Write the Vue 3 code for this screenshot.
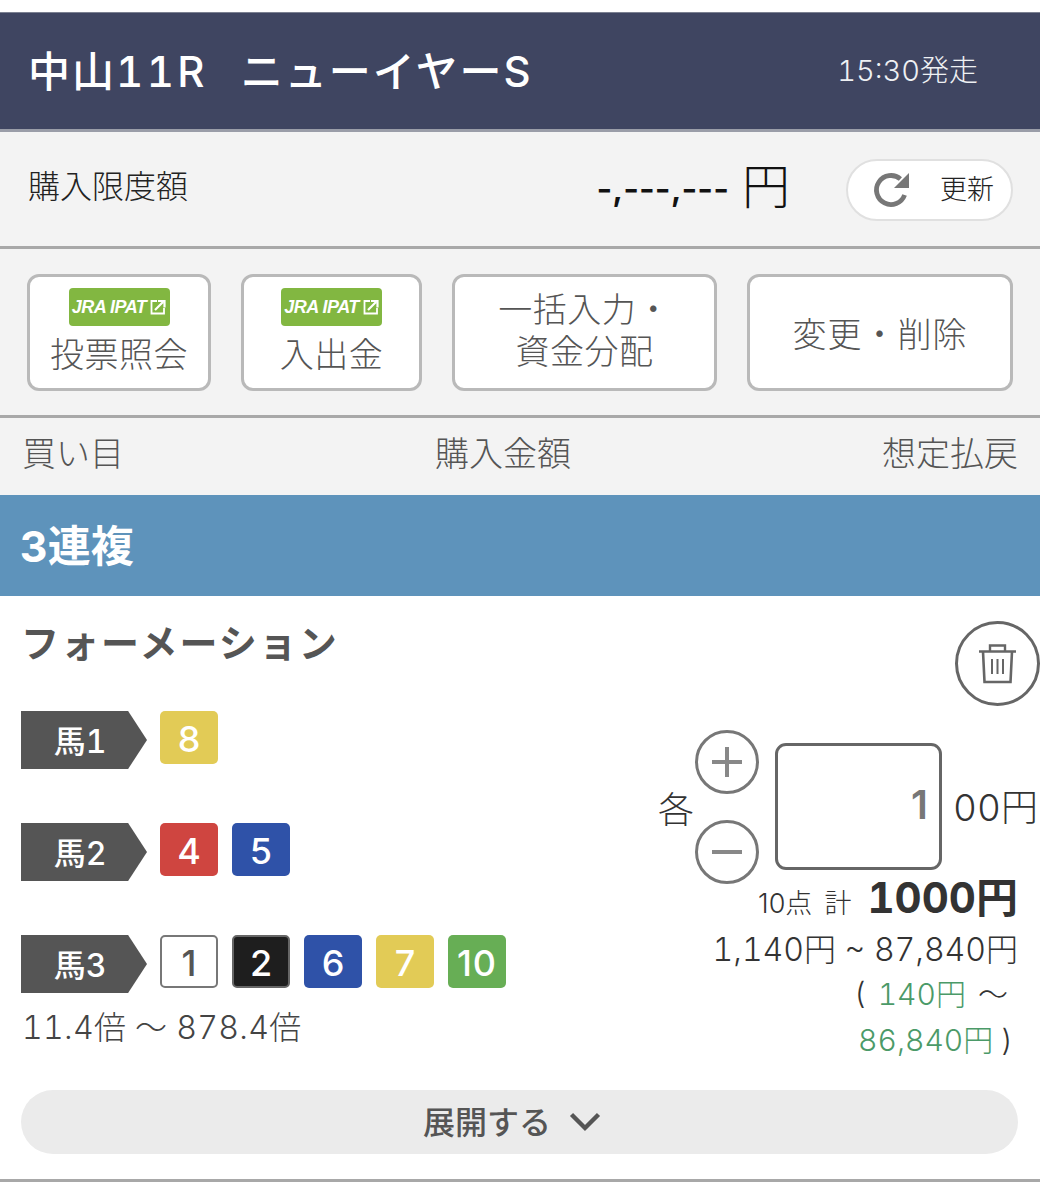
<template>
  <div class="page">
    <header class="race-head">
      <div class="race-title"><span>中山<span class="race-no">11R</span></span><span>ニューイヤーS</span></div>
      <div class="race-time">15:30発走</div>
    </header>

    <section class="limit-row">
      <div class="limit-label">購入限度額</div>
      <div class="limit-value">
        <span class="limit-num">-,---,---</span>
        <span class="limit-yen">円</span>
      </div>
      <button class="refresh">
        <svg width="38" height="38" viewBox="0 0 38 38">
          <path d="M32.6 24 A14.5 14.5 0 1 1 28.4 8" fill="none" stroke="#777" stroke-width="4.8" />
          <path d="M37 2 V17 H22 Z" fill="#777" />
        </svg>
        <span>更新</span>
      </button>
    </section>

    <section class="action-row">
      <button class="action w1">
        <span class="ipat">JRA IPAT
          <svg width="16" height="16" viewBox="0 0 16 16">
            <path d="M7 2H1.5V14.5H14V9" fill="none" stroke="#fff" stroke-width="1.8" />
            <path d="M5 11 13 3M8 2H14.5V8.5" fill="none" stroke="#fff" stroke-width="2.2" />
          </svg>
        </span>
        <span>投票照会</span>
      </button>
      <button class="action w2">
        <span class="ipat">JRA IPAT
          <svg width="16" height="16" viewBox="0 0 16 16">
            <path d="M7 2H1.5V14.5H14V9" fill="none" stroke="#fff" stroke-width="1.8" />
            <path d="M5 11 13 3M8 2H14.5V8.5" fill="none" stroke="#fff" stroke-width="2.2" />
          </svg>
        </span>
        <span>入出金</span>
      </button>
      <button class="action w3"><span>一括入力・</span><span>資金分配</span></button>
      <button class="action w4">変更・削除</button>
    </section>

    <section class="col-heads">
      <span>買い目</span>
      <span>購入金額</span>
      <span>想定払戻</span>
    </section>

    <div class="bet-type">3連複</div>

    <section class="card">
      <div class="card-top">
        <h2>フォーメーション</h2>
        <button class="trash">
          <svg width="37" height="40" viewBox="0 0 37 40" fill="none" stroke="#666">
            <path d="M0 7.5H37" stroke-width="2.6" />
            <path d="M11 7V1.5H26V7" stroke-width="2.4" />
            <path d="M4 7.5 5.5 38H31.5L33 7.5" stroke-width="2.6" />
            <path d="M13 15V30M18.5 15V30M24 15V30" stroke-width="2" />
          </svg>
        </button>
      </div>

      <div class="card-body">
        <div class="picks">
          <div v-for="row in rows" :key="row.label" class="pick-row">
            <div class="tag">{{ row.label }}</div>
            <div v-for="h in row.horses" :key="h.n" class="horse" :class="h.c">{{ h.n }}</div>
          </div>
          <div class="odds">11.4倍 ～ 878.4倍</div>
        </div>

        <div class="amount">
          <div class="amount-row">
            <span class="each">各</span>
            <div class="steppers">
              <button class="step">
                <svg width="30" height="30" viewBox="0 0 30 30"><path d="M0 15H30M15 0V30" stroke="#888" stroke-width="4" /></svg>
              </button>
              <button class="step">
                <svg width="30" height="30" viewBox="0 0 30 30"><path d="M0 15H30" stroke="#888" stroke-width="4" /></svg>
              </button>
            </div>
            <div class="input">1</div>
            <span class="unit">00円</span>
          </div>
          <div class="summary">
            <div class="total"><span class="pts">10点</span><span class="pts kei">計</span><b>1000円</b></div>
            <div class="payout">1,140円 ~ 87,840円</div>
            <div class="profit first">( <em>140円</em> ～</div>
            <div class="profit second"><em>86,840円</em> )</div>
          </div>
        </div>
      </div>

      <button class="expand">
        <span>展開する</span>
        <svg width="32" height="20" viewBox="0 0 32 20"><path d="M2.5 2.5 16 16 29.5 2.5" fill="none" stroke="#555" stroke-width="4.4" /></svg>
      </button>
    </section>
  </div>
</template>

<script setup>
const rows = [
  { label: '馬1', horses: [{ n: 8, c: 'yellow' }] },
  { label: '馬2', horses: [{ n: 4, c: 'red' }, { n: 5, c: 'blue' }] },
  {
    label: '馬3',
    horses: [
      { n: 1, c: 'white' },
      { n: 2, c: 'black' },
      { n: 6, c: 'blue' },
      { n: 7, c: 'yellow' },
      { n: 10, c: 'green' },
    ],
  },
];
</script>

<style>
body {
  margin: 0;
  background: #fff;
}
</style>

<style scoped>
.page {
  width: 1040px;
  padding-top: 12px;
  font-family: Inter, "Noto Sans CJK JP", "Noto Sans", sans-serif;
  font-variant-numeric: tabular-nums;
  color: #333;
}

button {
  font-family: inherit;
  font-variant-numeric: inherit;
  padding: 0;
  cursor: pointer;
}

.race-head {
  box-sizing: border-box;
  background: #3f4561;
  border-top: 1px solid #7b8091;
  border-bottom: 3px solid #9a9da8;
  height: 120px;
  display: flex;
  align-items: center;
  justify-content: space-between;
  padding: 0 62px 6px 28px;
  color: #fff;
}

.race-title {
  display: flex;
  gap: 33px;
  font-size: 42px;
  font-weight: 500;
  letter-spacing: 2px;
}

.race-no {
  letter-spacing: 3.4px;
}

.race-time {
  font-size: 29px;
  font-weight: 300;
  color: #eef0f3;
}

.limit-row {
  height: 117px;
  box-sizing: border-box;
  background: #f3f3f3;
  border-bottom: 3px solid #a8a8a8;
  display: flex;
  align-items: center;
  padding: 0 27px 0 28px;
}

.limit-label {
  font-size: 32px;
  font-weight: 300;
  color: #222;
  margin-bottom: 10px;
}

.limit-value {
  margin-left: auto;
  margin-right: 56px;
  display: flex;
  align-items: center;
  gap: 13px;
  color: #111;
  margin-bottom: 8px;
}

.limit-num {
  font-size: 34px;
  font-weight: 600;
  font-variant-numeric: normal;
  margin-top: 6px;
}

.limit-yen {
  font-size: 48px;
  font-weight: 300;
  margin-top: -4px;
}

.refresh {
  width: 167px;
  height: 62px;
  background: #fff;
  border: 2px solid #e0e0e0;
  border-radius: 31px;
  display: flex;
  align-items: center;
  gap: 28px;
  padding-left: 24px;
  box-sizing: border-box;
  font-size: 27px;
  font-weight: 300;
  color: #222;
  margin-top: 2px;
}

.refresh span {
  margin-top: -6px;
  margin-left: 2px;
}

.action-row {
  height: 169px;
  box-sizing: border-box;
  background: #f3f3f3;
  border-bottom: 3px solid #a8a8a8;
  display: flex;
  gap: 30px;
  padding: 25px 27px 0;
}

.action {
  height: 117px;
  box-sizing: border-box;
  background: #fff;
  border: 3px solid #b9b9b9;
  border-radius: 12px;
  font-size: 34px;
  font-weight: 300;
  line-height: 42px;
  color: #555;
  display: flex;
  flex-direction: column;
  align-items: center;
  justify-content: center;
  letter-spacing: 0.5px;
}

.w1 { width: 184px; padding-bottom: 1px; }
.w2 { width: 181px; padding-bottom: 1px; }
.w3 { width: 265px; padding-bottom: 4px; }
.w4 { width: 266px; padding-top: 4px; letter-spacing: 1px; }

.ipat {
  width: 101px;
  height: 38px;
  background: #82b741;
  border-radius: 4px;
  color: #fff;
  font-family: "Liberation Sans", sans-serif;
  font-size: 18px;
  font-style: italic;
  font-weight: 700;
  letter-spacing: -0.5px;
  display: flex;
  align-items: center;
  justify-content: center;
  gap: 4px;
  margin-bottom: 8px;
  line-height: 1;
}

.col-heads {
  height: 77px;
  box-sizing: border-box;
  background: #f3f3f3;
  display: flex;
  align-items: center;
  justify-content: space-between;
  padding: 0 22px 10px;
  font-size: 34px;
  font-weight: 300;
  color: #555;
}

.bet-type {
  height: 101px;
  background: #5e93bb;
  color: #fff;
  font-size: 43px;
  font-weight: 700;
  line-height: 102px;
  padding-left: 20px;
}

.card {
  height: 586px;
  box-sizing: border-box;
  border-bottom: 3px solid #a8a8a8;
  padding-top: 25px;
  position: relative;
}

.card-top {
  height: 84px;
  display: flex;
  justify-content: space-between;
  padding-left: 21px;
}

.card-top h2 {
  margin: 0;
  font-size: 38px;
  font-weight: 700;
  line-height: 44px;
  color: #555;
  letter-spacing: 2px;
}

.trash {
  width: 85px;
  height: 85px;
  box-sizing: border-box;
  background: #fff;
  border: 3px solid #666;
  border-radius: 50%;
  display: flex;
  align-items: center;
  justify-content: center;
}

.card-body {
  display: flex;
  justify-content: space-between;
  padding-left: 21px;
  height: 385px;
}

.picks {
  padding-top: 6px;
}

.pick-row {
  display: flex;
  gap: 13px;
  height: 58px;
  margin-bottom: 54px;
}

.pick-row .horse + .horse {
  margin-left: 1px;
}

.pick-row:nth-child(3) {
  margin-bottom: 13px;
}

.tag {
  width: 126px;
  height: 58px;
  background: #555;
  color: #fff;
  font-size: 32px;
  font-weight: 500;
  line-height: 62px;
  text-align: center;
  clip-path: polygon(0 0, 85% 0, 100% 50%, 85% 100%, 0 100%);
  padding-right: 8px;
  box-sizing: border-box;
}

.horse {
  width: 58px;
  height: 53px;
  box-sizing: border-box;
  border-radius: 5px;
  color: #fff;
  font-size: 36px;
  font-weight: 500;
  font-variant-numeric: normal;
  line-height: 56px;
  text-align: center;
}

.yellow { background: #e2cb56; }
.red { background: #cf4540; }
.blue { background: #2f52a8; }
.green { background: #67ae55; letter-spacing: 1px; }
.black {
  background: #1e1e1e;
  border: 2px solid #666;
  line-height: 52px;
}
.white {
  background: #fff;
  border: 2px solid #777;
  color: #555;
  line-height: 52px;
}

.odds {
  font-size: 32px;
  font-weight: 300;
  color: #444;
  line-height: 44px;
  margin-left: 1px;
  white-space: nowrap;
  letter-spacing: 0.3px;
}

.amount {
  width: 382px;
  padding-top: 25px;
}

.amount-row {
  display: flex;
  align-items: center;
  height: 154px;
}

.each {
  width: 37px;
  font-size: 36px;
  font-weight: 300;
  color: #333;
}

.steppers {
  display: flex;
  flex-direction: column;
  gap: 26px;
  width: 80px;
}

.step {
  width: 64px;
  height: 64px;
  box-sizing: border-box;
  background: #fff;
  border: 3px solid #777;
  border-radius: 50%;
  display: flex;
  align-items: center;
  justify-content: center;
}

.input {
  width: 167px;
  height: 127px;
  box-sizing: border-box;
  border: 3px solid #666;
  border-radius: 11px;
  margin-top: -2px;
  font-size: 40px;
  font-weight: 600;
  font-variant-numeric: normal;
  color: #777;
  line-height: 117px;
  text-align: right;
  padding-right: 11px;
}

.unit {
  margin-left: 11px;
  margin-top: -4px;
  font-size: 37px;
  font-weight: 300;
  white-space: nowrap;
  color: #333;
}

.summary {
  padding-right: 22px;
  text-align: right;
  font-weight: 300;
  font-size: 32px;
  color: #333;
}

.total {
  display: flex;
  justify-content: flex-end;
  align-items: baseline;
  line-height: 44px;
  margin-top: -8px;
}

.pts {
  font-size: 27px;
  font-variant-numeric: normal;
}

.kei {
  margin-left: 12px;
  margin-right: 16px;
}

.total b {
  font-size: 42px;
  font-weight: 700;
}

.payout {
  line-height: 48px;
  white-space: nowrap;
}

.profit {
  line-height: 46px;
  font-size: 30px;
}

.profit.first {
  margin-top: -3px;
  padding-right: 10px;
  word-spacing: 4px;
}

.profit.second {
  padding-right: 5px;
}

.profit em {
  font-style: normal;
  color: #4b9a68;
}

.expand {
  position: absolute;
  left: 21px;
  top: 494px;
  width: 997px;
  height: 64px;
  border: none;
  background: #ebebeb;
  border-radius: 32px;
  display: flex;
  align-items: center;
  justify-content: center;
  gap: 18px;
  font-size: 32px;
  font-weight: 500;
  color: #555;
  padding-right: 15px;
}

.expand span {
  margin-top: -4px;
}
</style>
